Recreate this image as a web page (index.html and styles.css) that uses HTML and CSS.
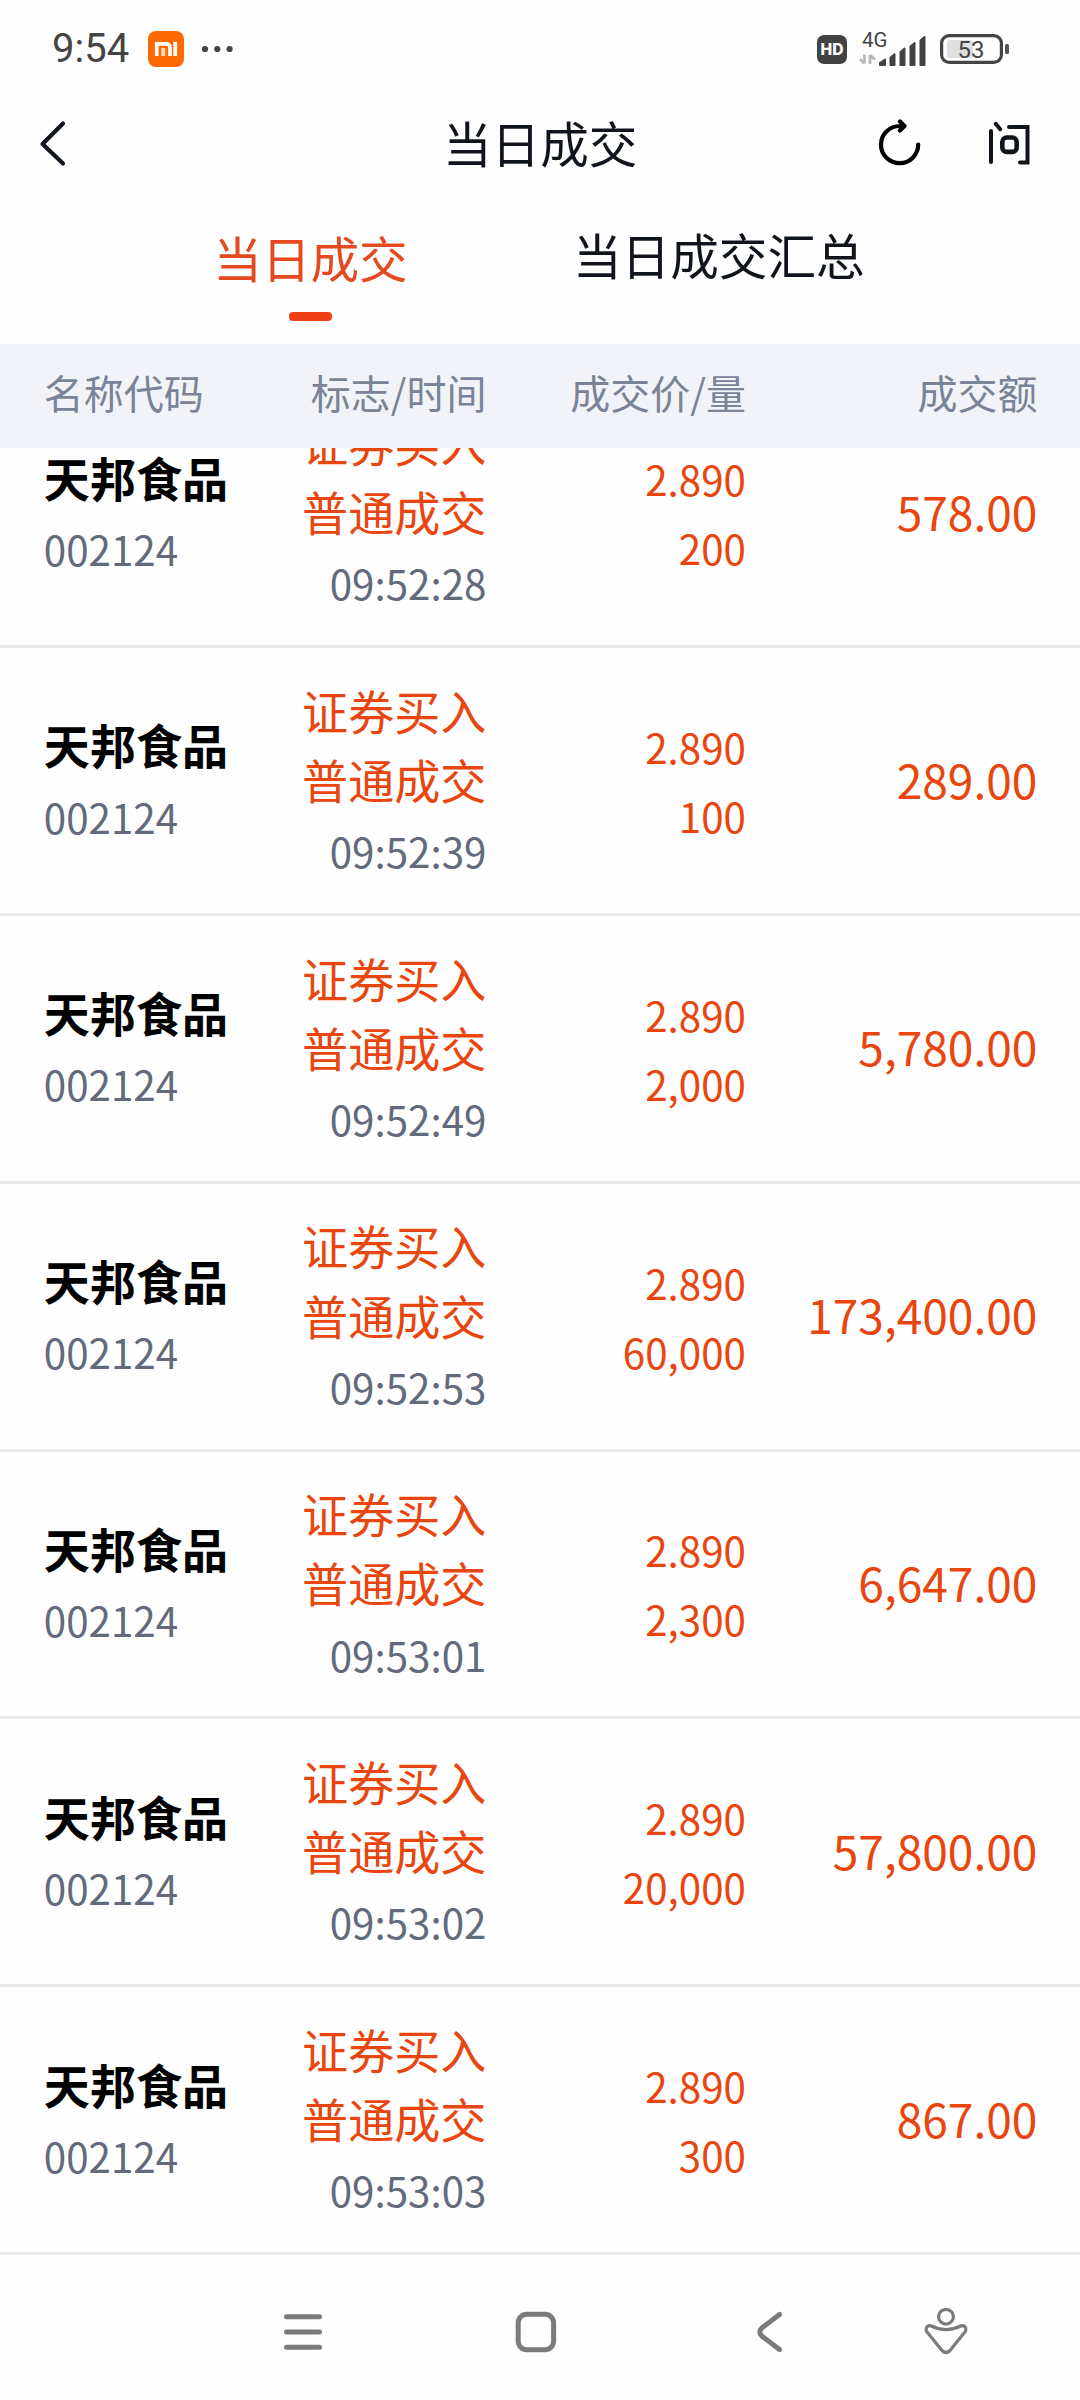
FILE: index.html
```
<!DOCTYPE html>
<html lang="zh-CN">
<head>
<meta charset="utf-8">
<title>当日成交</title>
<link rel="stylesheet" href="styles.css">
</head>
<body>
<div class="screen">
  <div class="statusbar">
    <span class="clock">9:54</span>
    <svg class="app-badge" width="36" height="36" viewBox="0 0 36 36">
      <rect width="36" height="36" rx="8" fill="#ff6a00"/>
      <path d="M8.7 25V12.9h9.3q4 0 4 4V25" fill="none" stroke="#fff" stroke-width="3.6"/>
      <rect x="13.4" y="17" width="3.8" height="8" fill="#fbdcc0"/>
      <rect x="25.3" y="11" width="3.8" height="14" fill="#fff"/>
    </svg>
    <svg class="more" width="32" height="8" viewBox="0 0 32 8" fill="#444">
      <circle cx="4" cy="4" r="3.1"/><circle cx="16.3" cy="4" r="3.1"/><circle cx="28.6" cy="4" r="3.1"/>
    </svg>
    <svg class="hd" width="30" height="29" viewBox="0 0 30 29">
      <rect width="30" height="29" rx="7" fill="#424242"/>
      <text class="hd-text" x="3.6" y="20.2" textLength="23" lengthAdjust="spacingAndGlyphs">HD</text>
    </svg>
    <div class="signal">
      <span class="network">4G</span>
      <svg class="bars" width="68" height="32" viewBox="0 0 68 32">
        <path d="M5.5 20.5v9M5.5 29.5L1 25M11 30v-9M11 21l5 4.5" fill="none" stroke="#b9b9b9" stroke-width="2.8"/>
        <path d="M20 28.5l5.5-3.8q1.5-.8 1.5 1V31q0 1-1 1h-5q-1 0-1-1zM30.5 23l4.5-3.6q1.5-.8 1.5 1V31q0 1-1 1h-4q-1 0-1-1zM40.5 17.5l4.5-3.8q1.5-.8 1.5 1V31q0 1-1 1h-4q-1 0-1-1zM50.5 12l4.5-3.8q1.5-.8 1.5 1V31q0 1-1 1h-4q-1 0-1-1zM60.5 6l4.5-3.8q1.5-.8 1.5 1V31q0 1-1 1h-4q-1 0-1-1z" fill="#424242"/>
      </svg>
    </div>
    <svg class="battery" width="70" height="30" viewBox="0 0 70 30">
      <rect x="1.6" y="1.6" width="59.8" height="26.8" rx="7.5" fill="none" stroke="#444" stroke-width="3.2"/>
      <rect x="7" y="6" width="26" height="18" rx="3" fill="#dfdfdf"/>
      <rect x="65" y="10" width="4" height="10" rx="1.5" fill="#555"/>
      <text class="battery-text" x="17.5" y="24" textLength="27">53</text>
    </svg>
  </div>

  <div class="appbar">
    <svg class="back" width="28" height="48" viewBox="0 0 28 48" fill="none" stroke="#10141c" stroke-width="4.2" stroke-linecap="round" stroke-linejoin="round">
      <path d="M25 3.500L4.500 24 25 43.500"/>
    </svg>
    <h1 class="title">当日成交</h1>
    <svg class="refresh" width="44" height="50" viewBox="0 0 44 50" fill="none" stroke="#000" stroke-width="4.2" stroke-linecap="round" stroke-linejoin="round">
      <path d="M40.200 25.500A18.600 18.600 0 1 1 21.600 7H26M22 2.500l4.500 4.500-4.500 4.500"/>
    </svg>
    <svg class="ask" width="44" height="48" viewBox="0 0 44 48" fill="none" stroke="#10141c" stroke-width="4" stroke-linecap="round">
      <path d="M4 11v31M8.800 3.800l4.400 5.400M22 7h18.500v35.500H33"/>
      <rect x="15.3" y="17.5" width="14.4" height="14.4" rx="4.5" stroke-width="4.6"/>
    </svg>
  </div>

  <div class="tabs">
    <div class="tab tab-active">当日成交</div>
    <div class="tab">当日成交汇总</div>
  </div>

  <div class="grid thead">
    <span>名称代码</span><span class="right">标志/时间</span><span class="right">成交价/量</span><span class="right">成交额</span>
  </div>

  <div class="list">
    <div class="row"><div class="grid">
      <div class="stack"><b class="name">天邦食品</b><span class="muted">002124</span></div>
      <div class="stack right"><span class="flag">证券买入<br>普通成交</span><span class="muted">09:52:28</span></div>
      <div class="num right">2.890<br>200</div><div class="amount right">578.00</div>
    </div></div>
    <div class="row"><div class="grid">
      <div class="stack"><b class="name">天邦食品</b><span class="muted">002124</span></div>
      <div class="stack right"><span class="flag">证券买入<br>普通成交</span><span class="muted">09:52:39</span></div>
      <div class="num right">2.890<br>100</div><div class="amount right">289.00</div>
    </div></div>
    <div class="row"><div class="grid">
      <div class="stack"><b class="name">天邦食品</b><span class="muted">002124</span></div>
      <div class="stack right"><span class="flag">证券买入<br>普通成交</span><span class="muted">09:52:49</span></div>
      <div class="num right">2.890<br>2,000</div><div class="amount right">5,780.00</div>
    </div></div>
    <div class="row"><div class="grid">
      <div class="stack"><b class="name">天邦食品</b><span class="muted">002124</span></div>
      <div class="stack right"><span class="flag">证券买入<br>普通成交</span><span class="muted">09:52:53</span></div>
      <div class="num right">2.890<br>60,000</div><div class="amount right">173,400.00</div>
    </div></div>
    <div class="row"><div class="grid">
      <div class="stack"><b class="name">天邦食品</b><span class="muted">002124</span></div>
      <div class="stack right"><span class="flag">证券买入<br>普通成交</span><span class="muted">09:53:01</span></div>
      <div class="num right">2.890<br>2,300</div><div class="amount right">6,647.00</div>
    </div></div>
    <div class="row"><div class="grid">
      <div class="stack"><b class="name">天邦食品</b><span class="muted">002124</span></div>
      <div class="stack right"><span class="flag">证券买入<br>普通成交</span><span class="muted">09:53:02</span></div>
      <div class="num right">2.890<br>20,000</div><div class="amount right">57,800.00</div>
    </div></div>
    <div class="row"><div class="grid">
      <div class="stack"><b class="name">天邦食品</b><span class="muted">002124</span></div>
      <div class="stack right"><span class="flag">证券买入<br>普通成交</span><span class="muted">09:53:03</span></div>
      <div class="num right">2.890<br>300</div><div class="amount right">867.00</div>
    </div></div>
  </div>

  <div class="navbar">
    <svg class="nav-menu" width="40" height="40" viewBox="0 0 40 40" stroke="#7b7b7b" stroke-width="5" stroke-linecap="round">
      <path d="M3.500 4.700h33M3.500 20h33M3.500 35.300h33"/>
    </svg>
    <svg class="nav-home" width="42" height="42" viewBox="0 0 42 42" fill="none" stroke="#7b7b7b" stroke-width="5">
      <rect x="3.2" y="3.2" width="35.4" height="35.6" rx="8.5"/>
    </svg>
    <svg class="nav-back" width="28" height="42" viewBox="0 0 28 42" fill="none" stroke="#7b7b7b" stroke-width="5" stroke-linecap="round" stroke-linejoin="round">
      <path d="M23.500 3.500L6 16.800Q1.500 21 6 25.200L23.500 38.500"/>
    </svg>
    <svg class="nav-assist" width="46" height="48" viewBox="0 0 46 48" fill="none" stroke="#7b7b7b" stroke-width="3.2" stroke-linejoin="round">
      <circle cx="23" cy="9.7" r="7.4"/>
      <path d="M7.800 18.800Q23 26.500 38.200 18.800C42.500 17.800 44 22.500 41.700 25.300L27 43.500Q23 47.500 19 43.500L4.300 25.300C2 22.500 3.500 17.800 7.800 18.800z"/>
    </svg>
  </div>
</div>
</body>
</html>
```
FILE: styles.css
```
* { box-sizing: border-box; }

body {
  margin: 0;
  background: #fefefe;
  font-family: "Noto Sans CJK SC", sans-serif;
  color: #10141c;
}

svg { display: block; flex: none; }

.screen {
  width: 1080px;
  height: 2400px;
  display: flex;
  flex-direction: column;
  overflow: hidden;
}

.statusbar {
  height: 98px;
  flex: none;
  display: flex;
  align-items: center;
  padding-left: 52px;
}
.clock {
  width: 96px;
  font: 40px/46px Roboto, sans-serif;
  color: #444;
}
.more { margin-left: 17px; }
.hd { margin-left: 584px; }
.hd-text { font: 800 15.5px Inter, sans-serif; fill: #fff; }
.signal {
  width: 68px;
  height: 34px;
  margin-left: 12px;
  display: grid;
}
.signal > * { grid-area: 1 / 1; }
.bars { align-self: end; }
.network {
  font: 20.5px/16px Roboto, sans-serif;
  color: #444;
  padding-left: 3px;
}
.battery { margin-left: 13px; }
.battery-text { font: 24px Roboto, sans-serif; fill: #444; }

.appbar {
  height: 92px;
  flex: none;
  display: flex;
  align-items: center;
  padding-left: 38px;
}
.title {
  margin: 0 0 4px 377px;
  width: 195px;
  font-size: 48.6px;
  line-height: 70px;
  font-weight: 400;
}
.refresh { margin-left: 240px; }
.ask { margin-left: 65px; }

.tabs {
  height: 154px;
  flex: none;
  display: flex;
  align-items: flex-start;
  gap: 165px;
  padding: 29px 0 0 213px;
  font-size: 48.6px;
  line-height: 70px;
}
.tab-active {
  display: flex;
  flex-direction: column;
  align-items: center;
  gap: 20px;
  padding-top: 3px;
  width: 195px;
  color: #e4491f;
}
.tab-active::after {
  content: "";
  width: 43px;
  height: 9px;
  border-radius: 4px;
  background: #f04018;
}

.grid {
  display: grid;
  grid-template-columns: 200px 242.6px 259.5px 1fr;
  align-items: center;
  padding: 0 42.6px 0 43.8px;
}
.right { text-align: right; }

.thead {
  height: 104px;
  flex: none;
  padding-bottom: 8px;
  background: #f2f3f8;
  color: #7a8397;
  font-size: 40px;
}

.list {
  height: 1807px;
  flex: none;
  overflow: hidden;
  display: flex;
  flex-direction: column;
  justify-content: flex-end;
}
.row {
  height: 267.84px;
  flex: none;
  display: flex;
  flex-direction: column;
}
.row .grid { flex: 1; }
.row::after {
  content: "";
  height: 2.88px;
  background: #e5e7ea;
}
.stack {
  display: flex;
  flex-direction: column;
  gap: 2px;
  line-height: 69.12px;
}
.name { font-size: 46.08px; color: #000; }
.muted { font-size: 40.32px; color: #626a7b; }
.flag { font-size: 46.08px; color: #e9460f; }
.num { font-size: 40.32px; line-height: 69.12px; color: #e9460f; padding-top: 1px; }
.amount { font-size: 46.08px; color: #e9460f; padding-bottom: 4px; }

.navbar {
  flex: 1;
  display: flex;
  align-items: center;
  padding: 0 0 0 283px;
  margin-bottom: -9px;
}
.nav-home { margin-left: 192px; }
.nav-back { margin-left: 199px; }
.nav-assist { margin-left: 139px; margin-bottom: 2px; }
```
